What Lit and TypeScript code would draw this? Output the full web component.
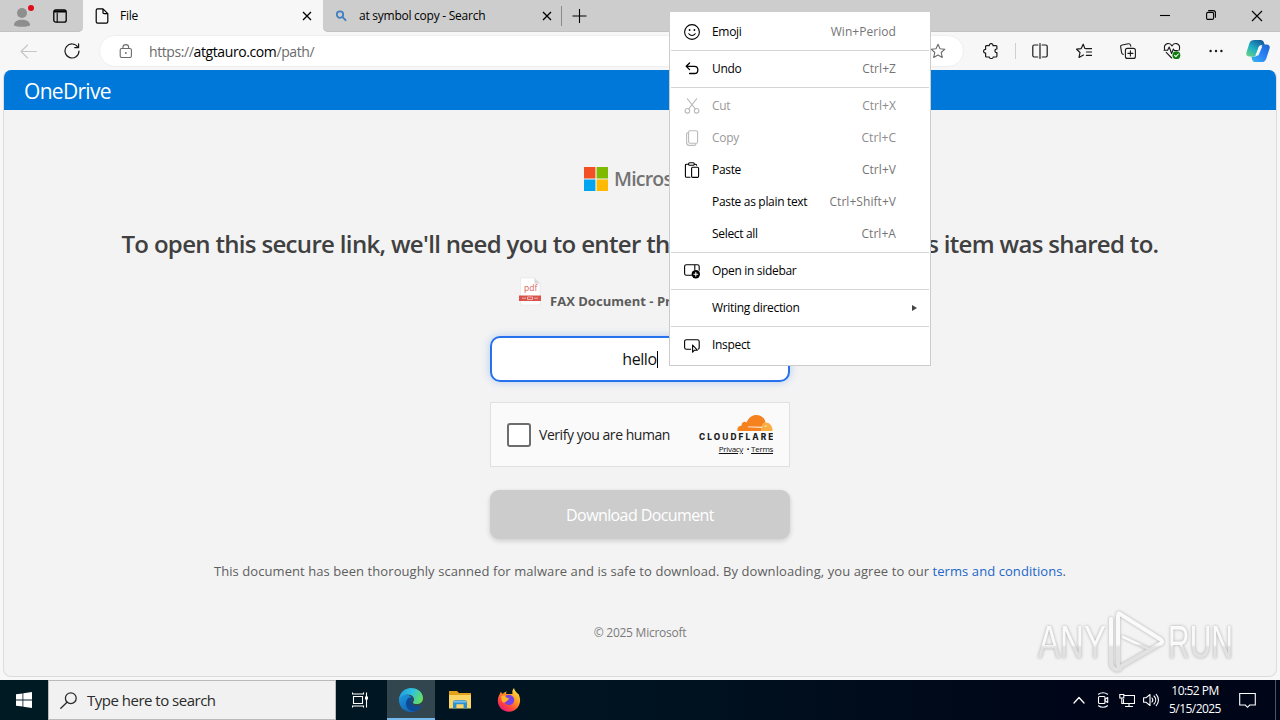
import { LitElement, html, css, svg, nothing } from 'lit';
import type { SVGTemplateResult } from 'lit';
import { customElement, property } from 'lit/decorators.js';

const icon = (size: number, body: SVGTemplateResult) => html`
  <svg
    width=${size}
    height=${size}
    viewBox="0 0 ${size} ${size}"
    fill="none"
    stroke="currentColor"
    stroke-width="1.1"
    stroke-linecap="round"
    stroke-linejoin="round"
  >${body}</svg>
`;

const star = 'M8 1.2l2 4.5 4.9.5-3.7 3.3 1.1 4.9L8 11.9l-4.3 2.5 1.1-4.9L1.1 6.2l4.9-.5z';

const menuIcons: Record<string, SVGTemplateResult> = {
  emoji: svg`
    <circle cx="8" cy="8" r="7.4"/>
    <path d="M4.8 9.8c1.6 2.2 4.8 2.2 6.4 0"/>
    <circle cx="5.6" cy="6" r=".9" fill="currentColor" stroke="none"/>
    <circle cx="10.4" cy="6" r=".9" fill="currentColor" stroke="none"/>`,
  undo: svg`<path stroke-width="1.3" d="M5.6 2L2.2 5.3l3.4 3.3M2.4 5.3h8c4.6 0 4.6 7.2 0 7.2H5.6"/>`,
  cut: svg`
    <circle cx="3.4" cy="12.8" r="2.3"/>
    <circle cx="12.6" cy="12.8" r="2.3"/>
    <path d="M3.4.8l7.9 10.1M12.6.8L4.7 10.9"/>`,
  copy: svg`
    <rect x="4.6" y=".8" width="9" height="12.4" rx="1.4"/>
    <path d="M4.4 2.6c-1.2 0-1.8.6-1.8 1.6v8.2c0 2 .9 3 2.8 3h4.8c1 0 1.6-.5 1.7-1.3"/>`,
  paste: svg`
    <path d="M4.600 2.200H2.500c-.7 0-1.100.4-1.100 1.100v10.900c0 .7.4 1.100 1.100 1.100h3.600M10.400 2.200h1.100c.7 0 1.100.4 1.100 1.100"/>
    <rect x="4.6" y=".7" width="5.6" height="2.6" rx="1.1"/>
    <rect x="7.6" y="5.3" width="7" height="10.1" rx="1.1"/>`,
  sidebar: svg`
    <path d="M7.4 12.3H2.400c-1.200 0-1.800-.6-1.800-1.800v-7c0-1.200.6-1.800 1.800-1.800h11c1.200 0 1.800.6 1.800 1.800v3.700M10.800 1.900v4.600"/>
    <circle cx="11.8" cy="11.2" r="4.200" fill="currentColor" stroke="none"/>
    <path stroke="#fff" d="M11.800 9.300v3.800M9.900 11.200h3.800"/>`,
  inspect: svg`
    <path d="M6.600 12.300H2.400c-1.200 0-1.800-.6-1.800-1.800v-6c0-1.200.6-1.800 1.800-1.800h11c1.200 0 1.800.6 1.800 1.800v6c0 .9-.3 1.400-.9 1.600"/>
    <path d="M8.600 8v7.200l1.900-2h2.800z"/>`,
};

interface MenuItem {
  label: string;
  keys?: string;
  icon?: string;
  disabled?: boolean;
  submenu?: boolean;
}

const menuGroups: MenuItem[][] = [
  [{ label: 'Emoji', keys: 'Win+Period', icon: 'emoji' }],
  [{ label: 'Undo', keys: 'Ctrl+Z', icon: 'undo' }],
  [
    { label: 'Cut', keys: 'Ctrl+X', icon: 'cut', disabled: true },
    { label: 'Copy', keys: 'Ctrl+C', icon: 'copy', disabled: true },
    { label: 'Paste', keys: 'Ctrl+V', icon: 'paste' },
    { label: 'Paste as plain text', keys: 'Ctrl+Shift+V' },
    { label: 'Select all', keys: 'Ctrl+A' },
  ],
  [{ label: 'Open in sidebar', icon: 'sidebar' }],
  [{ label: 'Writing direction', submenu: true }],
  [{ label: 'Inspect', icon: 'inspect' }],
];

@customElement('context-menu')
export class ContextMenu extends LitElement {
  static styles = css`
    :host {
      display: block;
      box-sizing: border-box;
      width: 262px;
      padding: 4px 0;
      border: 1px solid #ccc;
      background: #fff;
      color: #000;
      font-size: 12px;
      letter-spacing: -0.32px;
    }
    .item {
      display: flex;
      align-items: center;
      height: 32px;
      padding: 0 13px 0 14px;
    }
    .icon {
      display: flex;
      width: 16px;
      margin-right: 12px;
    }
    .label,
    .keys {
      padding-bottom: 1px;
      white-space: nowrap;
    }
    .label {
      flex: 1;
    }
    .keys {
      margin-right: 21px;
      color: #757575;
      letter-spacing: 0.05px;
    }
    .arrow {
      border: 3.5px solid transparent;
      border-left: 5px solid #444;
      border-right: 0;
    }
    .disabled .icon {
      color: #bbb;
    }
    .disabled .label {
      color: #9a9a9a;
    }
    .disabled .keys {
      color: #8c8c8c;
    }
    .separator {
      height: 1px;
      margin: 2px 1px;
      background: #d4d4d4;
    }
  `;

  @property({ attribute: false }) groups: MenuItem[][] = [];

  renderItem(item: MenuItem) {
    return html`
      <div class="item ${item.disabled ? 'disabled' : ''}">
        <span class="icon">${item.icon ? icon(16, menuIcons[item.icon]) : nothing}</span>
        <span class="label">${item.label}</span>
        ${item.keys ? html`<span class="keys">${item.keys}</span>` : nothing}
        ${item.submenu ? html`<span class="arrow"></span>` : nothing}
      </div>
    `;
  }

  render() {
    return this.groups.map(
      (group, i) => html`
        ${i ? html`<div class="separator"></div>` : nothing}
        ${group.map((item) => this.renderItem(item))}
      `
    );
  }
}

@customElement('browser-bar')
export class BrowserBar extends LitElement {
  static styles = css`
    :host {
      display: block;
      background: #f7f7f7;
      color: #1a1a1a;
    }
    svg {
      display: block;
      flex: none;
    }
    .tabs {
      display: flex;
      height: 32px;
      font-size: 12px;
      color: #000;
    }
    .corner,
    .rest {
      display: flex;
      align-items: center;
      background: #cdcdcd;
      box-shadow: inset 0 -1px #c2c2c2;
    }
    .corner {
      width: 83px;
      box-sizing: border-box;
      padding-left: 12px;
      gap: 19px;
      border-bottom-right-radius: 5px;
    }
    .rest {
      flex: 1;
      border-bottom-left-radius: 5px;
    }
    .tab {
      display: flex;
      align-items: center;
      box-sizing: border-box;
      width: 240px;
      padding: 0 11px;
    }
    .tab .title {
      flex: 1;
      margin-left: 10px;
      padding-bottom: 1px;
      letter-spacing: -0.25px;
    }
    .rest .tab {
      width: 239px;
      border-right: 1px solid #8a8a8a;
      height: 20px;
      padding-right: 9px;
    }
    .rest .title {
      margin-left: 9px;
    }
    .new-tab {
      margin-left: 9px;
    }
    .window {
      display: flex;
      margin-left: auto;
    }
    .window span {
      display: flex;
      justify-content: center;
      width: 46px;
    }
    .toolbar {
      display: flex;
      align-items: center;
      height: 38px;
      padding: 0 2px 0 20px;
    }
    .back {
      color: #c6c6c6;
      margin-right: 27px;
    }
    .address {
      display: flex;
      align-items: center;
      flex: 1;
      box-sizing: border-box;
      height: 32px;
      margin: 0 5px 0 19px;
      padding: 0 17px 0 19px;
      border: 1px solid #efefef;
      border-radius: 16px;
      background: #fff;
      color: #6b6b6b;
    }
    .url {
      flex: 1;
      margin-left: 16px;
      font-size: 14px;
      letter-spacing: -0.4px;
    }
    .url b {
      font-weight: 400;
      color: #000;
    }
    .tool {
      display: flex;
      justify-content: center;
      width: 44px;
    }
    .tool.copilot {
      width: 40px;
    }
    .divider {
      width: 1px;
      height: 16px;
      margin: 0 2px;
      background: #cfcfcf;
    }
  `;

  render() {
    const close = svg`<path stroke-width="1.3" stroke-linecap="butt" d="M1 1l8 8M9 1L1 9"/>`;
    return html`
      <div class="tabs">
        <div class="corner">
          ${icon(22, svg`
            <g stroke="none">
              <circle cx="10" cy="8" r="5" fill="#8e8e8e"/>
              <path fill="#8e8e8e" d="M2 20c0-7 16-7 16 0 0 2.400-16 2.400-16 0z"/>
              <circle cx="19" cy="3" r="3" fill="#e00b1c"/>
            </g>`)}
          ${icon(14, svg`
            <rect x=".8" y=".8" width="12.4" height="12.4" rx="2" stroke-width="1.300"/>
            <path stroke-width="2.200" stroke-linecap="butt" d="M1 2.400h12"/>
            <path d="M4.200 4v9"/>`)}
        </div>
        <div class="tab">
          ${icon(16, svg`<path stroke-width="1.200" d="M9 .9H3.600c-.9 0-1.400.5-1.400 1.400v11.400c0 .9.5 1.400 1.400 1.400h8.800c.9 0 1.400-.5 1.400-1.400V5.700zM9 .9v3.600c0 .8.4 1.200 1.200 1.200h3.600"/>`)}
          <span class="title">File</span>
          ${icon(10, close)}
        </div>
        <div class="rest">
          <div class="tab">
            ${icon(16, svg`
              <g stroke="#3f7fc0" stroke-width="1.800">
                <circle cx="6" cy="6.600" r="3.200"/>
                <path d="M8.600 9.200l3 3"/>
              </g>`)}
            <span class="title">at symbol copy - Search</span>
            ${icon(10, close)}
          </div>
          <span class="new-tab">${icon(16, svg`<path stroke-linecap="butt" d="M8.500 1v14M1.500 8h14"/>`)}</span>
          <div class="window">
            <span>${icon(10, svg`<path stroke-linecap="butt" d="M0 5.500h10"/>`)}</span>
            <span>${icon(10, svg`<rect x=".6" y="2.400" width="7" height="7" rx="1.400"/><path d="M2.600.6h4.600c1.400 0 2.200.8 2.200 2.200v4.400"/>`)}</span>
            <span>${icon(12, svg`<path stroke-linecap="butt" d="M1 1l10 10M11 1L1 11"/>`)}</span>
          </div>
        </div>
      </div>
      <div class="toolbar">
        <span class="back">${icon(17, svg`<path d="M16.400 8.500H1M7.600 2L1 8.500 7.600 15"/>`)}</span>
        ${icon(16, svg`<path stroke-width="1.200" d="M13.900 4.200A7 7 0 1 0 15 8M14.600.8v3.800h-3.900"/>`)}
        <div class="address">
          ${icon(14, svg`
            <rect x="1.200" y="4.500" width="11.200" height="9" rx="1.500"/>
            <path d="M4 4.300V3c0-3.200 5.600-3.200 5.600 0v1.300"/>
            <circle cx="6.800" cy="9" r=".9" fill="currentColor" stroke="none"/>`)}
          <span class="url">https://<b>atgtauro.com</b>/path/</span>
          ${icon(16, svg`<path d=${star}/>`)}
        </div>
        <span class="tool">${icon(16, svg`<path stroke-width="1.200" d="M3.400 2.600h2.900c-.3-2.700 4-2.700 3.700 0h3c.6 0 .9.3.9.9V6c-2.600-.3-2.600 3.900 0 3.600v3.500c0 .6-.3.9-.9.9h-2.800c.2 2-4.100 2-3.900 0H3.600c-.7 0-1-.3-1-.9V10c-2.700.3-2.700-4 0-3.700V3.500c0-.6.2-.9.800-.9z"/>`)}</span>
        <span class="divider"></span>
        <span class="tool">${icon(16, svg`<path stroke-width="1.200" d="M5.800 2H2.200C1.200 2 .8 2.500.8 3.400v9.200c0 .9.4 1.400 1.400 1.400h3.600M10.200 2h3.600c1 0 1.400.5 1.400 1.400v9.200c0 .9-.4 1.400-1.400 1.400h-3.600M8 .6v14.800"/>`)}</span>
        <span class="tool">${icon(16, svg`<path stroke-width="1.200" d="M9.600 5.600h6M10.400 9h5.200M10.400 12.400h5.200M8.800 5.400L7.200 1.200 5.200 5.600.6 6.200 4 9.500l-1 5 4.400-2.500"/>`)}</span>
        <span class="tool">${icon(16, svg`
          <rect x="5.400" y="5.400" width="10" height="10" rx="2"/>
          <path d="M10.400 7.900v5M7.900 10.400h5M3.400 11.500c-1.100-.2-1.600-.8-1.800-1.900L.7 4.100C.5 2.900 1 2.200 2.200 2L8.400.8c1.200-.2 1.900.3 2.200 1.500l.2.9"/>`)}</span>
        <span class="tool">${icon(18, svg`
          <path d="M9 4C7-.2 1.200 1.200 1.400 6c0 .5.1 1 .3 1.500M9 4c2-4.200 7.800-2.800 7.600 2 0 .9-.3 1.700-.7 2.500M3.200 10.400L8.700 16M1 8.300h3.600L6.200 5l2.400 6.500L10.400 7l1 1.500h3"/>
          <circle cx="13.400" cy="13.200" r="3.900" fill="#107c10" stroke="none"/>
          <path stroke="#fff" d="M11.600 13.300l1.300 1.300 2.400-2.600"/>`)}</span>
        <span class="tool">${icon(16, svg`<g fill="#1a1a1a" stroke="none"><circle cx="2.600" cy="8" r="1.200"/><circle cx="8" cy="8" r="1.200"/><circle cx="13.400" cy="8" r="1.200"/></g>`)}</span>
        <span class="tool copilot">${icon(24, svg`
          <defs>
            <linearGradient id="cp-a" x1="0" y1="1" x2=".7" y2="0">
              <stop offset="0" stop-color="#6fd67c"/><stop offset=".5" stop-color="#20b1c4"/><stop offset="1" stop-color="#155f9e"/>
            </linearGradient>
            <linearGradient id="cp-b" x1="1" y1="0" x2="0" y2="1">
              <stop offset="0" stop-color="#1b64d0"/><stop offset=".5" stop-color="#2b82f5"/><stop offset="1" stop-color="#35b9f0"/>
            </linearGradient>
          </defs>
          <g stroke="none">
            <path fill="url(#cp-b)" d="M16.500 5.500h4c2.600 0 3.800 1.700 3 4.300l-3.200 9.600C19.500 21.900 18 23 15.600 23H9.500c-1.800 0-2.900-.8-3.500-2.800L5.300 17.500H8c2.400 0 3.200-.8 3.900-3.100z"/>
            <path fill="url(#cp-a)" d="M8.500 1h6.200c1.700 0 2.700.8 3.300 2.700l.7 2.400h-2.600c-2.200 0-3.200 1.100-3.900 3.300L10.500 15c-.6 1.900-1.400 2.600-3 2.600H3.400C.8 17.600-.2 15.900.5 13.300l2.900-9C4.200 1.900 5.700 1 8.500 1z"/>
            <path fill="#f7f7f7" d="M13.100 7.500h3.200L12.400 16.600H9.300z"/>
          </g>`)}</span>
      </div>
    `;
  }
}

@customElement('download-page')
export class DownloadPage extends LitElement {
  static styles = css`
    :host {
      display: flex;
      flex-direction: column;
      align-items: center;
      box-sizing: border-box;
      height: 607px;
      margin: 0 3px;
      border: 1px solid #dcdcdc;
      border-top: 0;
      border-radius: 8px;
      background: #f3f3f3;
      overflow: hidden;
      white-space: nowrap;
    }
    svg {
      display: block;
      flex: none;
    }
    header {
      align-self: stretch;
      height: 40px;
      line-height: 43px;
      padding-left: 20px;
      background: #0078d9;
      color: #fff;
      font-size: 21px;
      letter-spacing: -0.7px;
    }
    .brand {
      display: flex;
      align-items: center;
      gap: 6px;
      width: 112px;
      height: 24px;
      margin-top: 57px;
      color: #737373;
      font-size: 19.5px;
      font-weight: 600;
      letter-spacing: -0.8px;
    }
    .brand span {
      padding-bottom: 1px;
    }
    h1 {
      margin: 36px 0 0;
      height: 35px;
      line-height: 34px;
      color: #404040;
      font-size: 24px;
      font-weight: 600;
      letter-spacing: -0.67px;
    }
    .file {
      display: flex;
      align-items: flex-end;
      gap: 8px;
      width: 244px;
      height: 30px;
      margin-top: 14px;
      color: #5c5c5c;
      font-size: 13px;
      font-weight: 700;
      letter-spacing: 0.02px;
    }
    .file span {
      line-height: 18px;
      margin-bottom: -4px;
    }
    .file text {
      font-weight: 400;
      font-size: 8.5px;
    }
    .field {
      display: flex;
      align-items: center;
      justify-content: center;
      box-sizing: border-box;
      width: 300px;
      height: 46px;
      margin-top: 30px;
      border: 2px solid #2672ec;
      border-radius: 10px;
      background: #fff;
      box-shadow: 0 0 8px rgba(38, 114, 236, 0.3);
      color: #111;
      font-size: 16px;
      letter-spacing: -0.4px;
    }
    .caret {
      width: 1px;
      height: 17px;
      background: #000;
    }
    .captcha {
      display: flex;
      align-items: center;
      box-sizing: border-box;
      width: 300px;
      height: 65px;
      margin-top: 20px;
      padding: 0 16px;
      border: 1px solid #e0e0e0;
      background: #fafafa;
      color: #232323;
      font-size: 14px;
    }
    .box {
      box-sizing: border-box;
      width: 24px;
      height: 24px;
      margin-right: 8px;
      border: 2px solid #6d6d6d;
      border-radius: 3px;
      background: #fff;
    }
    .verify {
      letter-spacing: -0.45px;
    }
    .cloudflare {
      display: flex;
      flex-direction: column;
      align-items: flex-end;
      margin-left: auto;
      font-size: 8px;
      line-height: 13px;
      color: #111;
      letter-spacing: -0.3px;
    }
    .cloudflare u {
      text-underline-offset: 1px;
    }
    .wordmark {
      fill: #1d1d1d;
      font: 800 8.300px Inter, sans-serif;
    }
    .submit {
      width: 300px;
      height: 49px;
      margin-top: 23px;
      border-radius: 9px;
      background: #ccc;
      box-shadow: 0 2px 5px rgba(0, 0, 0, 0.16);
      color: #fff;
      font-size: 16px;
      letter-spacing: -0.6px;
      line-height: 50px;
      text-align: center;
    }
    .notice {
      margin: 22px 0 0;
      color: #5e5e5e;
      font-size: 13px;
      letter-spacing: 0.075px;
      line-height: 20px;
    }
    .notice a {
      color: #2166c9;
    }
    footer {
      margin-top: 43px;
      color: #7b7b7b;
      font-size: 12px;
      letter-spacing: -0.25px;
      line-height: 18px;
    }
  `;

  render() {
    return html`
      <header>OneDrive</header>
      <div class="brand">
        ${icon(24, svg`
          <g stroke="none">
            <path fill="#f25022" d="M0 0h11.400v11.400H0z"/>
            <path fill="#7fba00" d="M12.600 0H24v11.400H12.600z"/>
            <path fill="#00a4ef" d="M0 12.600h11.400V24H0z"/>
            <path fill="#ffb900" d="M12.600 12.600H24V24H12.600z"/>
          </g>`)}
        <span>Microsoft</span>
      </div>
      <h1>To open this secure link, we'll need you to enter the email address that this item was shared to.</h1>
      <div class="file">
        <svg width="24" height="29" viewBox="0 0 24 29">
          <path fill="#fff" stroke="#e3e3e3" stroke-width=".6" d="M2.500 1h14l5.500 5.500V28h-19.500z"/>
          <path fill="#d9d9d9" d="M16.500 1l5.500 5.500h-5.500z"/>
          <text x="6" y="14" fill="#dc6058">pdf</text>
          <path fill="#d9534b" d="M1 18.500h22V24H1z"/>
          <path fill="none" stroke="#f6cfcb" stroke-width=".8" d="M4 21.200h4M16 21.200h4M9.500 20h5v2.500h-5z"/>
        </svg>
        <span>FAX Document - Preview.pdf</span>
      </div>
      <div class="field">hello<span class="caret"></span></div>
      <div class="captcha">
        <span class="box"></span>
        <span class="verify">Verify you are human</span>
        <div class="cloudflare">
          <svg width="74" height="28" viewBox="0 0 74 28">
            <path fill="#fbad41" d="M61 17c-.5-3 1-8.500 5.500-8.500 4 0 7 3 7 8.500z"/>
            <path fill="#f6821f" d="M38.500 17c-.8-3.200 1.300-5.400 4.200-5.600-.5-2.900 2.600-4.700 5-3.200C49.700 3.500 53.600 1 57.300 1c4.600 0 8.200 3 9.200 7.200-3 .8-4.700 3.500-4.500 8.800z"/>
            <path fill="#fff" d="M49 12.500l14.500.3-.3 1L49 13.300zM65.500 12l3-.5-2.500 1.500z"/>
            <text class="wordmark" x="0" y="25.800" textLength="74" lengthAdjust="spacing">CLOUDFLARE</text>
          </svg>
          <span><u>Privacy</u> &nbsp;• <u>Terms</u></span>
        </div>
      </div>
      <div class="submit">Download Document</div>
      <p class="notice">This document has been thoroughly scanned for malware and is safe to download. By downloading, you agree to our <a>terms and conditions</a>.</p>
      <footer>© 2025 Microsoft</footer>
    `;
  }
}

@customElement('task-bar')
export class TaskBar extends LitElement {
  static styles = css`
    :host {
      display: flex;
      height: 40px;
      background: linear-gradient(90deg, #001a24, #001320 50%, #000518 85%);
      color: #fff;
    }
    svg {
      display: block;
    }
    .cell {
      display: flex;
      align-items: center;
      justify-content: center;
      width: 48px;
    }
    .search {
      display: flex;
      align-items: center;
      gap: 10px;
      box-sizing: border-box;
      width: 288px;
      padding-left: 11px;
      border: 1px solid #b9b9b9;
      background: #f1f1f1;
      color: #2b2b2b;
      font-size: 15px;
      letter-spacing: -0.5px;
    }
    .active {
      box-sizing: border-box;
      margin: 0 1px 0 3px;
      border-bottom: 2px solid #76b9ed;
      padding-top: 2px;
      background: #32464f;
    }
    .firefox {
      margin-left: 1px;
    }
    .tray {
      display: flex;
      align-items: center;
      margin-left: auto;
    }
    .tray > span {
      display: flex;
      justify-content: center;
      width: 24px;
    }
    .clock {
      width: 64px;
      font-size: 12px;
      line-height: 18px;
      letter-spacing: -0.55px;
      text-align: center;
    }
    .tray > .notifications {
      width: 40px;
      margin-right: 8px;
    }
    .peek {
      width: 4px;
      height: 40px;
      border-left: 1px solid #4d5361;
    }
  `;

  render() {
    return html`
      <div class="cell">
        ${icon(16, svg`<path fill="#fff" stroke="none" d="M0 2.300L6.500 1.400v6.200H0zM7.300 1.300L16 0v7.600H7.300zM0 8.400h6.500v6.200L0 13.700zM7.300 8.400H16V16l-8.700-1.300z"/>`)}
      </div>
      <div class="search">
        ${icon(17, svg`<circle cx="10.800" cy="6.200" r="5.400" stroke-width="1.300"/><path stroke-width="1.300" d="M7 10.200L.8 16.300"/>`)}
        <span>Type here to search</span>
      </div>
      <div class="cell">
        ${icon(16, svg`
          <g stroke-linecap="butt" stroke-linejoin="miter">
            <path d="M1.500 4.500h9v7h-9zM.5.500v1.500h11V.5M.5 15.500V14h11v1.500M14.500.5v15"/>
            <path fill="#fff" stroke="none" d="M13 4.500h3v3h-3z"/>
          </g>`)}
      </div>
      <div class="cell active">
        ${icon(24, svg`
          <defs>
            <linearGradient id="edge-top" x1="0" y1=".3" x2="1" y2=".6">
              <stop offset="0" stop-color="#1e9de0"/><stop offset=".5" stop-color="#2fc2df"/><stop offset="1" stop-color="#6ae05a"/>
            </linearGradient>
            <linearGradient id="edge-side" x1="0" y1="0" x2="1" y2="1">
              <stop offset="0" stop-color="#1f9be0"/><stop offset="1" stop-color="#0d4fa3"/>
            </linearGradient>
          </defs>
          <g stroke="none">
            <path fill="url(#edge-side)" d="M0 12C0 7 4 5.500 8 6.500c3 .8 5 2.500 5 5.500-2 1-2.500 5 2.500 6.200 2.500.6 5 .2 7-1C20.600 21.300 17 24 12 24 5 24 0 19 0 12z"/>
            <path fill="#0c4a94" d="M10.500 9.500C6 11.500 5.500 19 11 22.300c4 2.200 9-.3 11.500-5-4 2.200-10.500 1-10.500-4 0-1.300 1-2 1-3.300z"/>
            <path fill="url(#edge-top)" d="M0 12C0 5.500 5.200 0 12 0c7 0 12 4.700 12 10 0 4-3 6-6.300 6-2.500 0-4.200-.9-3.700-1.800 2.500-3 .5-7.700-5.500-7.700C4 6.500.6 8.700 0 12z"/>
          </g>`)}
      </div>
      <div class="cell">
        ${icon(22, svg`
          <g stroke="none">
            <path fill="#e3a21a" d="M0 2h8l2 2h12V9H0z"/>
            <path fill="#fbd565" d="M0 6h22v13.500H0z"/>
            <path fill="#2f8fd3" d="M4 19.500v-6c0-1.500.8-2.300 2.300-2.300h9.400c1.500 0 2.300.8 2.300 2.300v6h-3.400v-4.300H7.400v4.300z"/>
            <path fill="#73bff0" d="M4.500 12h13v1.600h-13z"/>
          </g>`)}
      </div>
      <div class="cell firefox">
        ${icon(24, svg`
          <defs>
            <linearGradient id="fox" x1=".9" y1="0" x2=".2" y2="1">
              <stop offset="0" stop-color="#fff44f"/><stop offset=".4" stop-color="#ff9a22"/><stop offset=".75" stop-color="#ff4040"/><stop offset="1" stop-color="#e31587"/>
            </linearGradient>
          </defs>
          <g stroke="none">
            <path fill="url(#fox)" d="M2.500 6.500L4 3.500c.3 1.200.8 1.800 1.800 2.300C7 4.500 8.500 3.500 10 3.500c-.8.8-1 1.500-1 2.500h6.500C15 3.500 15.500 1.500 17 0c.5 2.800 2.300 3.800 3.800 5.700 1 .2 1.200 1.200 1.400 2 3 7.300-1.700 16-10.200 16C3 23.700-2 14.500 2.500 6.500z"/>
            <path fill="#7542e5" d="M8 9c1-2.300 4.500-3 7-1.300 3.700 2.600 2.700 8.800-2.200 9.300-3 .2-5.300-1.500-5.600-4 1.500.8 3.300.2 4.300-1.200C10.500 11.500 8.500 10.500 8 9z"/>
            <path fill="#ffb52b" d="M4 8.500c1.500-1.500 3.300-1.200 4.500 0 .8 1.300 2 1.600 3.800 1.900-.3 1.400-2.300 1.400-2.800 2.600-1 2-3.500 1.500-4.500.5z"/>
          </g>`)}
      </div>
      <div class="tray">
        <span>${icon(12, svg`<path stroke-width="1.300" d="M1 9l5-5.500L11 9"/>`)}</span>
        <span>${icon(16, svg`<rect x="3.500" y="4.500" width="6.500" height="7" rx="1"/><path d="M10 7.300L12.700 5.500v5L10 8.700M3.500 2.200C6 .3 10 .3 12.500 2.200M3.500 13.800c2.500 1.900 6.500 1.900 9 0"/>`)}</span>
        <span>${icon(16, svg`<path stroke-linejoin="miter" d="M5.500 3.500h10v8h-11V7.500M10 11.500v3M6.500 14.500h7M.8 2.500h4v3.500h-4zM2.800 6v5.500h1.700"/>`)}</span>
        <span>${icon(16, svg`<path d="M.6 5.700h2.600L7 2.500v11l-3.800-3.200H.6zM9 6c1 1.200 1 2.800 0 4M11 4c2.200 2.300 2.200 5.700 0 8M13.200 2.300c3 3.300 3 8.100 0 11.400"/>`)}</span>
        <div class="clock">10:52 PM<br>5/15/2025</div>
        <span class="notifications">${icon(17, svg`<path stroke-linejoin="miter" d="M.7 1.500h15.600v11.500h-5.600L8.500 15.300 6.300 13H.7z"/>`)}</span>
        <div class="peek"></div>
      </div>
    `;
  }
}

@customElement('app-root')
export class AppRoot extends LitElement {
  static styles = css`
    :host {
      display: block;
      position: relative;
      width: 1280px;
      height: 720px;
      overflow: hidden;
      background: #f7f7f7;
      font-family: 'Open Sans', 'Noto Sans', sans-serif;
    }
    task-bar {
      margin-top: 3px;
    }
    context-menu {
      position: absolute;
      left: 669px;
      top: 11px;
    }
    .watermark {
      position: absolute;
      left: 1032px;
      top: 606px;
      overflow: visible;
      filter: drop-shadow(0 0 1.5px rgba(0, 0, 0, 0.3));
    }
    .watermark text {
      fill: url(#mark);
      font: 400 46px 'Liberation Sans', sans-serif;
    }
  `;

  render() {
    return html`
      <browser-bar></browser-bar>
      <download-page></download-page>
      <task-bar></task-bar>
      <svg class="watermark" width="230" height="70" viewBox="0 0 230 70">
        <defs>
          <linearGradient id="mark" x1="0" y1="0" x2="0" y2="1">
            <stop offset=".55" stop-color="#fafafa"/>
            <stop offset=".6" stop-color="#e2e2e2"/>
          </linearGradient>
        </defs>
        <text x="6" y="52" textLength="68" lengthAdjust="spacingAndGlyphs">ANY</text>
        <g fill="none" stroke="url(#mark)" stroke-width="4" stroke-linejoin="round" stroke-linecap="round">
          <path d="M79 13v43c0 6 5 9 9 7M88 8l40 25c3 2 3 3 0 5L90 60c-3 2-4 1-4-2V10c0-3 1-3 2-2z"/>
          <path stroke-width="2.500" d="M91 31l28 13"/>
        </g>
        <text x="136" y="52" textLength="65" lengthAdjust="spacingAndGlyphs">RUN</text>
      </svg>
      <context-menu .groups=${menuGroups}></context-menu>
    `;
  }
}
